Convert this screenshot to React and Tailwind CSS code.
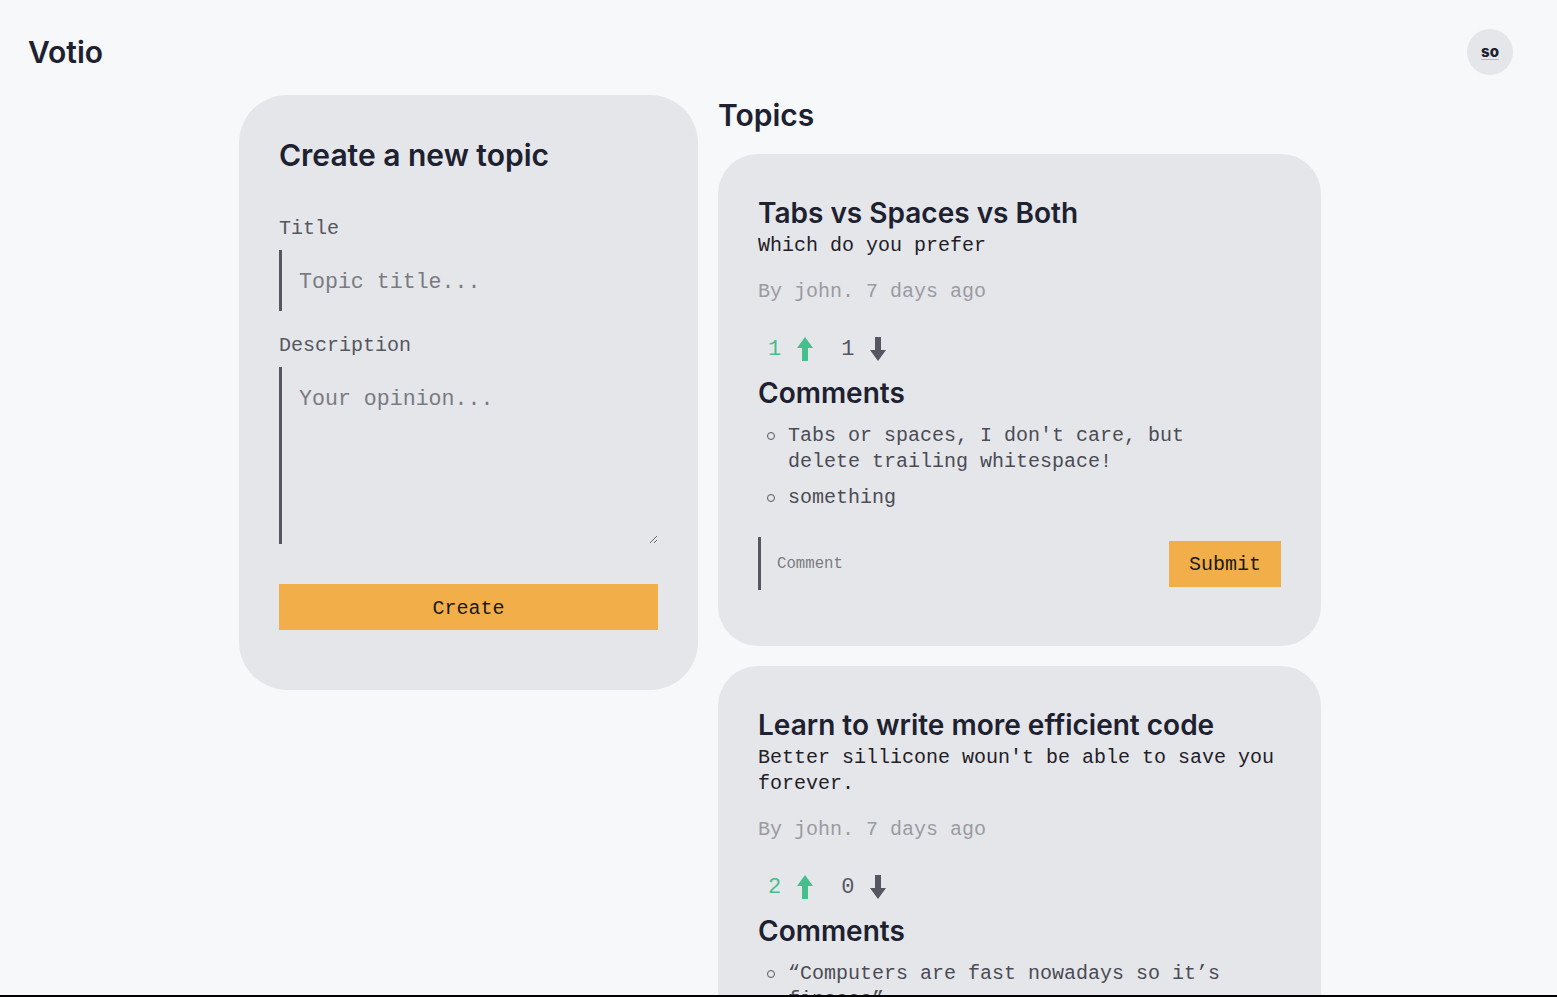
import React from "react";

const mono = "font-['Liberation_Mono','DejaVu_Sans_Mono',monospace]";
const sans = "font-['Inter','Noto_Sans',sans-serif]";

const ArrowUp = ({ className }) => (
  <svg width="16" height="24" viewBox="0 0 16 24" className={className}>
    <path d="M8 0 L16 11 L11 11 L11 24 L5 24 L5 11 L0 11 Z" fill="currentColor" />
  </svg>
);

const ArrowDown = ({ className }) => (
  <svg width="16" height="24" viewBox="0 0 16 24" className={className}>
    <path d="M5 0 L11 0 L11 13 L16 13 L8 24 L0 13 L5 13 Z" fill="currentColor" />
  </svg>
);

const topics = [
  {
    id: 1,
    title: "Tabs vs Spaces vs Both",
    description: "Which do you prefer",
    author: "john",
    ago: "7 days ago",
    up: 1,
    down: 1,
    comments: ["Tabs or spaces, I don't care, but delete trailing whitespace!", "something"],
  },
  {
    id: 2,
    title: "Learn to write more efficient code",
    description: "Better sillicone woun't be able to save you forever.",
    author: "john",
    ago: "7 days ago",
    up: 2,
    down: 0,
    comments: ["\u201cComputers are fast nowadays so it\u2019s finesse\u201d", "Premature optimization is the root of all evil"],
  },
];

const TopicCard = ({ t }) => (
  <div className="bg-[#e5e6ea] rounded-[40px] px-10 pt-10 pb-14">
    <h3 className={`${sans} text-[28px] leading-[38px] font-semibold text-[#1d2130]`}>{t.title}</h3>
    <p className={`${mono} text-[20px] leading-[26px] text-[#1f2128] mt-[1px]`}>{t.description}</p>
    <p className={`${mono} text-[20px] leading-[26px] text-[#9a9ba1] mt-5`}>
      By {t.author}. {t.ago}
    </p>
    <div className={`${mono} flex items-center h-[30px] mt-[29px] pl-[10px] text-[22px]`}>
      <span className="text-[#45bf8b]">{t.up}</span>
      <ArrowUp className="text-[#45bf8b] ml-4" />
      <span className="text-[#55565f] ml-[28px]">{t.down}</span>
      <ArrowDown className="text-[#55565f] ml-4" />
    </div>
    <h4 className={`${sans} text-[28px] leading-[36px] font-semibold text-[#1d2130] mt-[11px]`}>Comments</h4>
    <ul className="mt-[12px] flex flex-col gap-[10px]">
      {t.comments.map((c, i) => (
        <li key={i} className="flex items-start">
          <span className="w-[8px] h-[8px] rounded-full border border-[#55565f] mt-[9px] ml-[9px] mr-[13px] shrink-0"></span>
          <span className={`${mono} text-[20px] leading-[26px] text-[#4b4c55] max-w-[440px]`}>{c}</span>
        </li>
      ))}
    </ul>
    <form className="flex items-center mt-[26px] gap-4" onSubmit={(e) => e.preventDefault()}>
      <input
        placeholder="Comment"
        className={`${mono} flex-1 h-[53px] border-l-[3px] border-[#55565f] pl-[16px] text-[15.7px] bg-transparent outline-none placeholder:text-[#7a7b82]`}
      />
      <button className={`${mono} h-[46px] w-[112px] pt-[3px] bg-[#f2ae48] text-[20px] text-[#1a1a1a]`}>Submit</button>
    </form>
  </div>
);

export default function App() {
  return (
    <div className="min-h-screen bg-[#f7f8fa]">
      <header className="flex items-center justify-between pl-7 pr-11 pt-[29px]">
        <h1 className={`${sans} text-[30px] leading-[36px] font-semibold text-[#1d2130]`}>Votio</h1>
        <div className="w-[46px] h-[46px] rounded-full bg-[#e5e6ea] flex items-center justify-center">
          <span className={`${sans} text-[15px] font-extrabold text-[#1d2130] underline decoration-[#f2ae48] underline-offset-2`}>so</span>
        </div>
      </header>

      <main className="flex justify-center items-start gap-5 mt-[20px] pl-[3px] pb-10">
        <div className="w-[459px] bg-[#e5e6ea] rounded-[48px] px-10 pt-10 pb-[60px]">
          <h2 className={`${sans} text-[30px] leading-[40px] font-semibold text-[#1d2130]`}>Create a new topic</h2>
          <label className={`${mono} block text-[20px] leading-[26px] text-[#55565f] mt-[41px]`}>Title</label>
          <input
            placeholder="Topic title..."
            className={`${mono} block w-full h-[61px] mt-[8px] border-l-[3px] border-[#55565f] pl-[17px] pt-[2px] text-[21.6px] bg-transparent outline-none placeholder:text-[#7a7b82]`}
          />
          <label className={`${mono} block text-[20px] leading-[26px] text-[#55565f] mt-[22px]`}>Description</label>
          <textarea
            placeholder="Your opinion..."
            className={`${mono} block w-full h-[177px] mt-[8px] border-l-[3px] border-[#55565f] pl-[17px] pt-[17px] text-[21.6px] leading-[30px] bg-transparent outline-none placeholder:text-[#7a7b82]`}
          />
          <button className={`${mono} block w-full h-[46px] mt-10 pt-[3px] bg-[#f2ae48] text-[20px] text-[#1a1a1a]`}>Create</button>
        </div>

        <div className="w-[603px]">
          <h2 className={`${sans} text-[30px] leading-[36px] font-semibold text-[#1d2130] mt-[2px] mb-[21px]`}>Topics</h2>
          <div className="flex flex-col gap-5">
            {topics.map((t) => (
              <TopicCard key={t.id} t={t} />
            ))}
          </div>
        </div>
      </main>

      <div className="fixed bottom-0 left-0 right-0 h-[2px] bg-black"></div>
    </div>
  );
}
